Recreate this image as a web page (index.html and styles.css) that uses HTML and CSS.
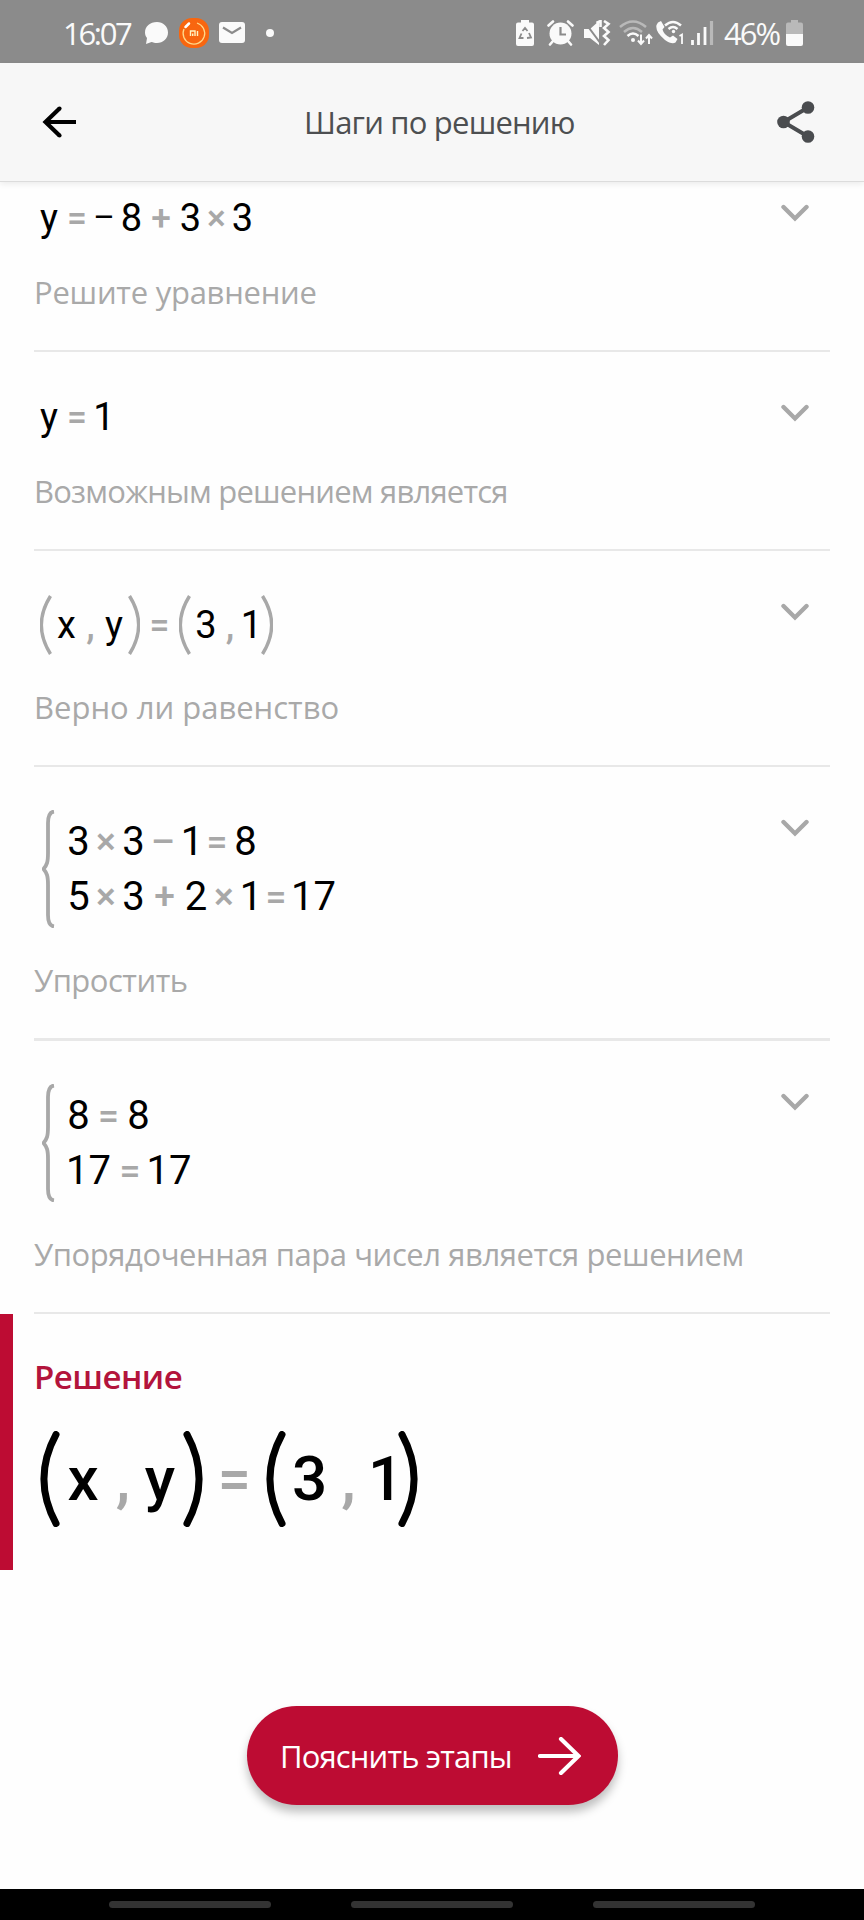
FILE: index.html
```html
<!DOCTYPE html>
<html lang="ru">
<head>
    <meta charset="UTF-8">
    <meta name="viewport" content="width=device-width, initial-scale=1.0">
    <title>Шаги по решению</title>
    <link rel="stylesheet" href="styles.css">
</head>
<body>
    <!-- Shared shapes -->
    <svg class="defs">
        <symbol id="chevron" viewBox="0 0 28 18"><path d="M2.500 3L14 14.500L25.500 3" fill="none" stroke="#a8a8a8" stroke-width="4.400" stroke-linecap="round"/></symbol>
        <symbol id="paren" viewBox="0 0 12 60"><path d="M10.500 1C-1.500 20-1.500 40 10.500 59" fill="none" stroke="#a8a8a8" stroke-width="3.400"/></symbol>
        <symbol id="paren-bold" viewBox="0 0 20 96"><path d="M16 3.500C0 33 0 63 16 92.500" fill="none" stroke="#000" stroke-width="7" stroke-linecap="round"/></symbol>
        <symbol id="brace" viewBox="0 0 13 118"><path d="M12 1.500C8 2 6 6 6 13V43C6 52 5 55 1.500 59C5 63 6 66 6 75V105C6 112 8 116 12 116.500" fill="none" stroke="#a8a8a8" stroke-width="3.800"/></symbol>
    </svg>

    <div class="status-bar">
        <span class="clock">16:07</span>
        <svg class="ic-chat" width="23" height="23" viewBox="0 0 23 23"><path d="M12 0C18 0 23 4.500 23 10.500S18 21 12 21C10 21 8 20.500 6.500 20L1 22L2 16C.7 14.500 0 12.500 0 10.500C0 4.500 5 0 12 0Z" fill="#fafafa"/></svg>
        <svg class="ic-mi" width="30" height="30" viewBox="0 0 30 30">
            <rect width="30" height="30" rx="13" fill="#f8660f"/>
            <path d="M18 5A10.800 10.800 0 1 1 5 11" fill="none" stroke="#ffd98a" stroke-width="1.300"/>
            <path d="M6.500 9L10 5.500" stroke="#fff" stroke-width="2.500" stroke-linecap="round"/>
            <path d="M11.500 18V13H16V18M18.500 13V18M13.700 18V15.500" fill="none" stroke="#fff3c0" stroke-width="1.400"/>
        </svg>
        <svg class="ic-mail" width="26" height="21" viewBox="0 0 26 21"><rect width="26" height="21" rx="3" fill="#fafafa"/><path d="M4 5.500L13 11L22 5.500" fill="none" stroke="#8b8b8b" stroke-width="2.200"/></svg>
        <span class="dot"></span>

        <div class="status-right">
            <svg width="18" height="26" viewBox="0 0 18 26">
                <path d="M5 0H13V2.500H16Q18 2.500 18 4.500V24Q18 26 16 26H2Q0 26 0 24V4.500Q0 2.500 2 2.500H5Z" fill="#fafafa"/>
                <path d="M6.500 11L9 8L11.500 11M13 13L15 17.500L11 18M7.500 18H3.500L5.500 13.500" fill="none" stroke="#8b8b8b" stroke-width="1.800"/>
            </svg>
            <svg class="ic-alarm" width="27" height="26" viewBox="0 0 27 26">
                <circle cx="13.500" cy="13.500" r="11" fill="#fafafa"/>
                <path d="M1.500 5.500L6 1.500M25.500 5.500L21 1.500M6 21L3 24.500M21 21L24 24.500" stroke="#fafafa" stroke-width="2.600" stroke-linecap="round"/>
                <path d="M13.500 7V14.500H19" fill="none" stroke="#8b8b8b" stroke-width="2.200"/>
            </svg>
            <svg class="ic-mute" width="27" height="26" viewBox="0 0 27 26">
                <path d="M0 9H6L15 1V25L6 18H0Z" fill="#fafafa"/>
                <path d="M0 1L17 24" stroke="#8b8b8b" stroke-width="2"/>
                <path d="M12.500 3L16.500 1V7M20 1L24.500 4L20 8L24.500 12L20 16L24.500 20L20 25" fill="none" stroke="#fafafa" stroke-width="2.600"/>
            </svg>
            <svg class="ic-wifi" width="34" height="26" viewBox="0 0 34 26">
                <path d="M1 7Q14-4 27 7M5 12Q14 4 23 12" fill="none" stroke="#b9b9b9" stroke-width="2.500"/>
                <path d="M8.500 16Q14 11 19.500 16" fill="none" stroke="#fafafa" stroke-width="2.500"/>
                <circle cx="14" cy="20" r="2" fill="#fafafa"/>
                <path d="M22 14.500V23M19 20.500L22 24L25 20.500M30 24V15.500M27 18.500L30 15L33 18.500" fill="none" stroke="#fafafa" stroke-width="2"/>
            </svg>
            <svg class="ic-call" width="28" height="26" viewBox="0 0 28 26">
                <path d="M2 2.500L5 1L8.500 7L6.500 9.500Q8 15 14 17.500L17 15.500L21.500 19L19.500 22.500Q16 25 9 20Q-1 12 .5 5Z" fill="#fafafa"/>
                <path d="M9 5.500Q17-1.500 25 5.500M12.500 9Q17 5 21.500 9" fill="none" stroke="#fafafa" stroke-width="2.400"/>
                <circle cx="17.500" cy="11.500" r="1.700" fill="#fafafa"/>
                <path d="M23.500 16L26 14.500V24" fill="none" stroke="#fafafa" stroke-width="1.800"/>
            </svg>
            <svg class="ic-signal" width="23" height="24" viewBox="0 0 23 24">
                <path d="M1.500 19V24M7.500 12V24M14 6V24" stroke="#fafafa" stroke-width="2.800"/>
                <path d="M20.500 0V24" stroke="#b9b9b9" stroke-width="3.200"/>
            </svg>
            <span class="percent">46%</span>
            <svg width="17" height="26" viewBox="0 0 17 26">
                <path d="M5 0H12V2.500H15Q17 2.500 17 4.500V14H0V4.500Q0 2.500 2 2.500H5Z" fill="#b9b9b9"/>
                <path d="M0 14H17V24Q17 26 15 26H2Q0 26 0 24Z" fill="#fafafa"/>
            </svg>
        </div>
    </div>

    <header class="header">
        <svg width="34" height="32" viewBox="0 0 34 32"><path d="M34 16H3M17.500 2.500L3.500 16L17.500 29.500" fill="none" stroke="#000" stroke-width="4.200"/><circle cx="17.500" cy="2.500" r="2.100"/><circle cx="17.500" cy="29.500" r="2.100"/></svg>
        <h1 class="title">Шаги по решению</h1>
        <svg width="38" height="42" viewBox="0 0 38 42"><path d="M31 6.500L6.500 21L31 35.500" fill="none" stroke="#4a4c4f" stroke-width="4"/><g fill="#4a4c4f"><circle cx="31" cy="6.500" r="6.300"/><circle cx="6.500" cy="21" r="6.300"/><circle cx="31" cy="35.500" r="6.300"/></g></svg>
    </header>

    <main class="steps">
        <section class="step first">
            <div class="expr eq-sum">
                <span>y</span><i>=</i><span class="neg">–</span><span>8</span><i>+</i><span>3</span><i>×</i><span>3</span>
            </div>
            <p class="label l1">Решите уравнение</p>
            <svg class="chevron"><use href="#chevron"/></svg>
        </section>

        <section class="step">
            <div class="expr eq-one">
                <span>y</span><i>=</i><span>1</span>
            </div>
            <p class="label l2">Возможным решением является</p>
            <svg class="chevron"><use href="#chevron"/></svg>
        </section>

        <section class="step">
            <div class="expr eq-pair">
                <svg class="paren"><use href="#paren"/></svg><span>x</span><i class="comma">,</i><span>y</span><svg class="paren close"><use href="#paren"/></svg>
                <i>=</i>
                <svg class="paren"><use href="#paren"/></svg><span>3</span><i class="comma">,</i><span class="last">1</span><svg class="paren close"><use href="#paren"/></svg>
            </div>
            <p class="label l3">Верно ли равенство</p>
            <svg class="chevron"><use href="#chevron"/></svg>
        </section>

        <section class="step thick">
            <div class="system">
                <svg class="brace"><use href="#brace"/></svg>
                <div class="rows">
                    <div class="expr row-a"><span>3</span><i>×</i><span>3</span><i>–</i><span>1</span><i>=</i><span>8</span></div>
                    <div class="expr row-b"><span>5</span><i>×</i><span>3</span><i>+</i><span>2</span><i>×</i><span>1</span><i>=</i><span>17</span></div>
                </div>
            </div>
            <p class="label l4">Упростить</p>
            <svg class="chevron"><use href="#chevron"/></svg>
        </section>

        <section class="step">
            <div class="system">
                <svg class="brace"><use href="#brace"/></svg>
                <div class="rows">
                    <div class="expr row-c"><span>8</span><i>=</i><span>8</span></div>
                    <div class="expr row-d"><span>17</span><i>=</i><span>17</span></div>
                </div>
            </div>
            <p class="label l5">Упорядоченная пара чисел является решением</p>
            <svg class="chevron"><use href="#chevron"/></svg>
        </section>
    </main>

    <section class="solution">
        <h2 class="solution-title">Решение</h2>
        <div class="expr eq-big">
            <svg class="paren"><use href="#paren-bold"/></svg><span>x</span><i class="comma">,</i><span>y</span><svg class="paren close"><use href="#paren-bold"/></svg>
            <i>=</i>
            <svg class="paren"><use href="#paren-bold"/></svg><span>3</span><i class="comma">,</i><span class="last">1</span><svg class="paren close"><use href="#paren-bold"/></svg>
        </div>
    </section>

    <button class="explain">
        <span>Пояснить этапы</span>
        <svg width="43" height="38" viewBox="0 0 43 38"><path d="M2 19H40M23 2L40.500 19L23 36" fill="none" stroke="#fff" stroke-width="4.200" stroke-linecap="round"/></svg>
    </button>

    <div class="nav-bar">
        <span></span><span></span><span></span>
    </div>
</body>
</html>
```
FILE: styles.css
```css
* {
    box-sizing: border-box;
}
body {
    margin: 0;
    height: 1920px;
    display: flex;
    flex-direction: column;
    background: #fefefe;
    font-family: "Open Sans", "Noto Sans", sans-serif;
    overflow: hidden;
}
svg {
    display: block;
    flex: none;
}
.defs {
    display: none;
}

/* Status bar */
.status-bar {
    height: 63px;
    flex: none;
    display: flex;
    align-items: center;
    padding: 2px 61px 0 63px;
    background: #8b8b8b;
    color: #fafafa;
}
.clock, .percent {
    font-size: 31px;
    line-height: 40px;
    white-space: nowrap;
}
.clock {
    width: 82px;
    letter-spacing: -2.3px;
}
.ic-chat {
    margin-top: 2px;
}
.ic-mi {
    margin-left: 11px;
}
.ic-mail {
    margin-left: 10px;
}
.dot {
    width: 8px;
    height: 8px;
    margin-left: 21px;
    border-radius: 50%;
    background: #fafafa;
}
.status-right {
    display: flex;
    align-items: center;
    margin-left: auto;
}
.ic-alarm {
    margin-left: 13px;
}
.ic-mute {
    margin-left: 10px;
}
.ic-wifi {
    margin-left: 8px;
}
.ic-call {
    margin-left: 3px;
}
.ic-signal {
    margin-left: 7px;
}
.percent {
    width: 61px;
    margin-left: 10px;
    margin-right: 1px;
    letter-spacing: -2px;
}

/* Header */
.header {
    height: 119px;
    flex: none;
    display: flex;
    align-items: center;
    padding: 0 49px 0 42px;
    background: #f7f7f7;
    border-bottom: 1px solid #dcdcdc;
    box-shadow: 0 2px 6px rgba(0, 0, 0, 0.08);
}
.title {
    margin: 0 auto 0 228px;
    color: #4d4f51;
    font-size: 31px;
    font-weight: 400;
    line-height: 44px;
    letter-spacing: -0.8px;
    white-space: nowrap;
}

/* Steps */
.steps {
    flex: none;
    padding: 0 34px;
}
.step {
    position: relative;
    padding: 40px 0 38px;
    border-bottom: 2px solid #e8e8e8;
}
.step.first {
    padding-top: 11px;
}
.step.thick {
    border-bottom-width: 3px;
}
.label {
    margin: 29px 0 0;
    color: #a9a9a9;
    font-size: 31px;
    line-height: 40px;
    white-space: nowrap;
}
.l1 {
    letter-spacing: -0.25px;
}
.l2 {
    letter-spacing: -0.78px;
}
.l4 {
    letter-spacing: -0.5px;
}
.l5 {
    letter-spacing: -0.42px;
}
.chevron {
    position: absolute;
    top: 52px;
    right: 21px;
    width: 28px;
    height: 18px;
}
.first .chevron {
    top: 22px;
}

/* Expressions, one column per token */
.expr {
    display: grid;
    align-items: center;
    height: 50px;
    padding-left: 6px;
    font-family: Roboto, sans-serif;
    font-size: 38px;
    line-height: 50px;
    color: #000;
}
.expr span, .expr i {
    display: flex;
    justify-content: center;
    font-style: normal;
}
.expr i {
    color: #a8a8a8;
    font-size: 0.93em;
    font-weight: 500;
}
.expr .comma {
    font-size: 1em;
}
.expr .neg {
    font-size: 33px;
}
.close {
    transform: scaleX(-1);
}
.eq-sum {
    grid-template-columns: 18px 38px 16px 30px 38px 21px 31px 21px;
}
.eq-sum span:nth-child(4) {
    padding-left: 9px;
}
.eq-one {
    grid-template-columns: 18px 38px 16px;
}
.eq-pair {
    height: 67px;
    grid-template-columns: 12px 29px 19px 28px 12px 39px 12px 30px 18px 22px 12px;
}
.eq-pair .paren {
    width: 12px;
    height: 60px;
}
.eq-pair .last {
    padding-left: 3px;
}
.system {
    height: 124px;
    display: flex;
    align-items: center;
    padding-left: 8px;
}
.brace {
    width: 13px;
    height: 118px;
    margin-right: 12px;
}
.rows .expr {
    height: 55px;
    padding-left: 0;
    font-size: 40px;
    line-height: 55px;
}
.row-a {
    grid-template-columns: 23px 32px 23px 36px 22px 28px 29px;
}
.row-b {
    grid-template-columns: 23px 32px 23px 39px 24px 32px 22px 28px 47px;
}
.row-c {
    grid-template-columns: 23px 37px 23px;
}
.row-d {
    grid-template-columns: 43px 40px 38px;
}

/* Solution */
.solution {
    height: 256px;
    flex: none;
    padding: 40px 0 0 21px;
    border-left: 13px solid #bd0c33;
}
.solution-title {
    margin: 0;
    color: #b3143c;
    font-size: 33px;
    font-weight: 600;
    line-height: 46px;
    letter-spacing: -0.5px;
}
.eq-big {
    height: 96px;
    margin-top: 30px;
    font-size: 62px;
    font-weight: 500;
    line-height: 96px;
    grid-template-columns: 20px 46px 31px 46px 20px 63px 20px 47px 28px 37px 20px;
}
.eq-big i {
    padding-top: 2px;
    font-weight: 600;
}
.eq-big .comma {
    padding: 0 0 0 3px;
}
.eq-big .paren {
    width: 20px;
    height: 96px;
}
.eq-big .last {
    padding-left: 12px;
}

/* Button */
.explain {
    width: 371px;
    height: 99px;
    flex: none;
    display: flex;
    align-items: center;
    justify-content: space-between;
    margin: 136px 0 0 247px;
    padding: 0 37px 0 33px;
    border: none;
    border-radius: 50px;
    background: #bd0c33;
    box-shadow: 0 7px 10px rgba(0, 0, 0, 0.25);
    color: #fff;
    font-family: inherit;
    font-size: 31px;
    letter-spacing: -0.85px;
    white-space: nowrap;
}

/* Navigation bar */
.nav-bar {
    height: 31px;
    display: flex;
    justify-content: center;
    gap: 80px;
    margin-top: auto;
    padding-top: 12px;
    background: #000;
}
.nav-bar span {
    width: 162px;
    height: 7px;
    border-radius: 4px;
    background: #333;
}
```
